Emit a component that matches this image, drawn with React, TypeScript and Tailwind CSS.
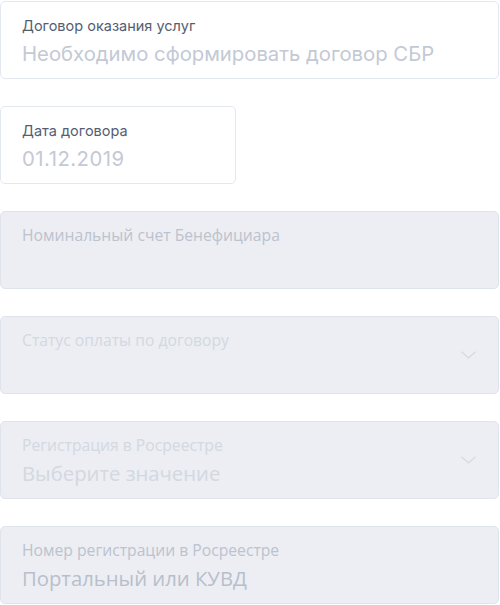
import React from "react";

function Chevron() {
  return (
    <svg width="15" height="8" viewBox="0 0 15 8" fill="none" className="absolute right-[22px] top-1/2 -translate-y-1/2">
      <path d="M0.5 0.8l7 6.2 7-6.2" stroke="#d3d8e1" strokeWidth="1.2" />
    </svg>
  );
}

export default function App() {
  return (
    <div className="flex flex-col gap-[27px] pt-px bg-white w-[500px] h-[605px] overflow-hidden" style={{ fontFamily: "Inter, 'Noto Sans', sans-serif" }}>
      <div className="h-[78px] w-[499px] rounded-[5px] border border-[#e3e8f0] bg-white px-[21px] pt-[14px]">
        <div className="text-[14.5px] leading-[20px] text-[#545e72]">Договор оказания услуг</div>
        <div className="mt-[5px] text-[20.3px] leading-[26px] text-[#c3c9d5]">Необходимо сформировать договор СБР</div>
      </div>
      <div className="h-[78px] w-[236px] rounded-[5px] border border-[#e3e8f0] bg-white px-[21px] pt-[14px]">
        <div className="text-[14.5px] leading-[20px] text-[#545e72]">Дата договора</div>
        <div className="mt-[5px] text-[20.3px] leading-[26px] tracking-[0.5px] text-[#c3c9d5]">01.12.2019</div>
      </div>
      <div className="h-[78px] w-[499px] rounded-[5px] border border-[#dfe4ec] bg-[#eceef3] px-[21px] pt-[13px]" style={{ fontFamily: "'Open Sans', sans-serif" }}>
        <div className="text-[15.7px] leading-[20px] text-[#bcc2ce]">Номинальный счет Бенефициара</div>
      </div>
      <div className="relative h-[78px] w-[499px] rounded-[5px] border border-[#dfe4ec] bg-[#eceef3] px-[21px] pt-[13px]" style={{ fontFamily: "'Open Sans', sans-serif" }}>
        <div className="text-[15.7px] leading-[20px] text-[#d3d8e1]">Статус оплаты по договору</div>
        <Chevron />
      </div>
      <div className="relative h-[78px] w-[499px] rounded-[5px] border border-[#dfe4ec] bg-[#eceef3] px-[21px] pt-[13px]" style={{ fontFamily: "'Open Sans', sans-serif" }}>
        <div className="text-[15.7px] leading-[20px] text-[#d3d8e1]">Регистрация в Росреестре</div>
        <div className="mt-[5px] text-[20.3px] leading-[26px] text-[#d3d8e1]">Выберите значение</div>
        <Chevron />
      </div>
      <div className="h-[78px] w-[499px] rounded-[5px] border border-[#dfe4ec] bg-[#eceef3] px-[21px] pt-[13px]" style={{ fontFamily: "'Open Sans', sans-serif" }}>
        <div className="text-[15.7px] leading-[20px] text-[#bcc2ce]">Номер регистрации в Росреестре</div>
        <div className="mt-[5px] text-[20.3px] leading-[26px] text-[#b8bfcb]">Портальный или КУВД</div>
      </div>
    </div>
  );
}
